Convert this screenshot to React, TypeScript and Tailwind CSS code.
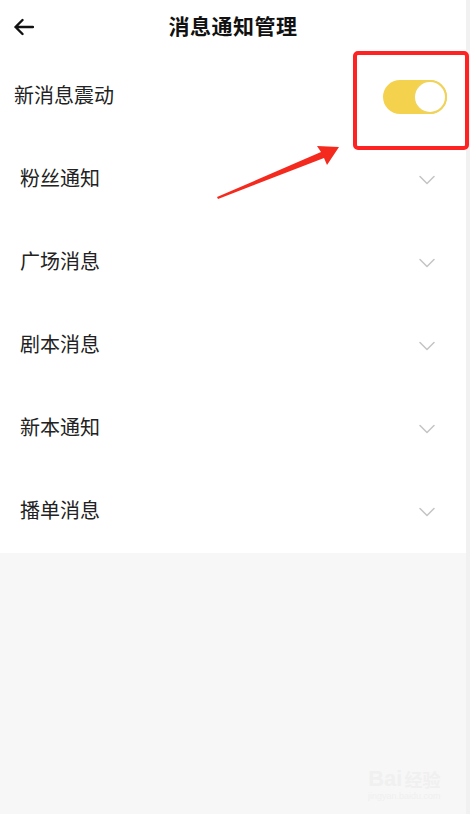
import React from "react";

const font = { fontFamily: '"Noto Sans CJK SC", "Noto Sans", sans-serif' };

function Chevron() {
  return (
    <svg width="16" height="10" viewBox="0 0 16 10" fill="none">
      <path d="M1 1.5 L8 8.5 L15 1.5" stroke="#c4c4c4" strokeWidth="1.5" strokeLinecap="round" strokeLinejoin="round" />
    </svg>
  );
}

const rows = ["粉丝通知", "广场消息", "剧本消息", "新本通知", "播单消息"];

export default function App() {
  return (
    <div className="relative flex w-[470px] h-[814px] bg-[#f7f7f7] overflow-hidden" style={font}>
      <div className="flex flex-col w-[466px]">
        <div className="bg-white">
          <div className="relative flex items-center justify-center h-[55px]">
            <svg className="absolute left-[13px] top-[18px]" width="21" height="18" viewBox="0 0 21 18" fill="none">
              <path d="M20 9 H2.5 M9.5 2 L2.5 9 L9.5 16" stroke="#111" strokeWidth="2.4" strokeLinecap="round" strokeLinejoin="round" />
            </svg>
            <span className="text-[21px] font-bold text-[#111] leading-none tracking-[0.5px] pb-[4px]">消息通知管理</span>
          </div>
          <div className="flex items-center justify-between h-[83px] pl-[14px] pr-[19px]">
            <span className="text-[20px] text-[#222] leading-none pb-[3px]">新消息震动</span>
            <div className="relative w-[64px] h-[34px] rounded-full bg-[#f4d24e]">
              <div className="absolute right-0 top-0 w-[34px] h-[34px] rounded-full bg-white border-[2px] border-[#f0d35a]" />
            </div>
          </div>
          {rows.map((r) => (
            <div key={r} className="flex items-center justify-between h-[83px] pl-[20px] pr-[31px]">
              <span className="text-[20px] text-[#222] leading-none pb-[3px]">{r}</span>
              <Chevron />
            </div>
          ))}
        </div>
      </div>
      <div className="w-[4px] bg-[#f1f1f1]" />

      <div className="absolute left-[353px] top-[51px] w-[116px] h-[99px] border-[4px] border-[#ff2222] rounded-[5px]" />
      <svg className="absolute left-0 top-0" width="470" height="814" viewBox="0 0 470 814">
        <polygon points="217,197 321,152 317,146 339,147 327,165 324,158 218,199" fill="#f52a1e" />
      </svg>

      <div className="absolute left-[368px] top-[768px] flex flex-col items-center text-[#f0f0f0]">
        <div className="flex items-center gap-[2px]">
          <span className="text-[22px] font-bold leading-none" style={{ fontFamily: '"Liberation Sans", sans-serif' }}>Bai</span>
          <span className="text-[18px] font-bold leading-none">经验</span>
        </div>
        <span className="text-[9px] leading-none mt-[2px]" style={{ fontFamily: '"Liberation Sans", sans-serif' }}>jingyan.baidu.com</span>
      </div>
    </div>
  );
}
